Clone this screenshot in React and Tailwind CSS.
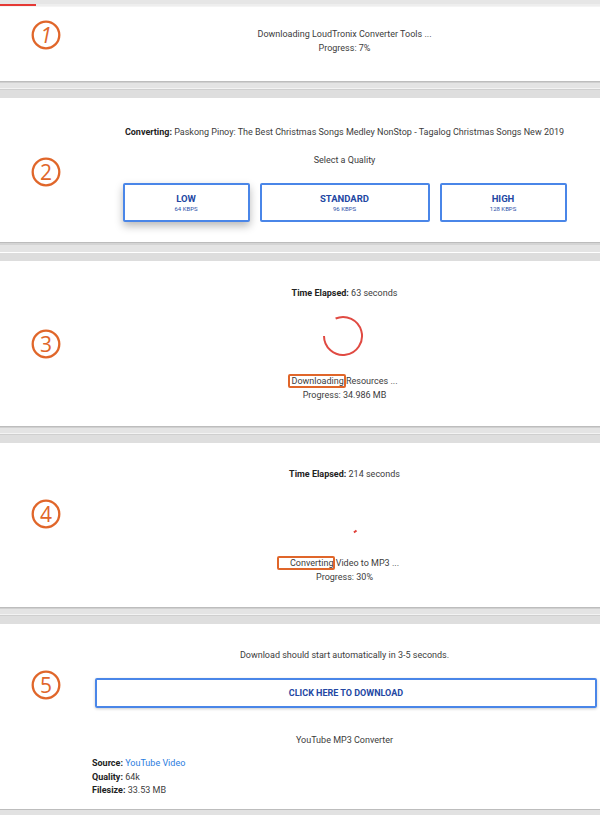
import React from "react";

const font = { fontFamily: "Roboto, 'Noto Sans', Arial, sans-serif" };

function Num({ n, italic }) {
  return (
    <svg width="30" height="30" viewBox="0 0 30 30">
      <circle cx="15" cy="15" r="13.3" fill="none" stroke="#e0662a" strokeWidth="2.3" />
      <text
        x="15"
        y="22.5"
        textAnchor="middle"
        fontSize="21"
        fill="#e0662a"
        fontStyle={italic ? "italic" : "normal"}
        fontFamily="'Open Sans', 'DejaVu Sans', sans-serif"
      >
        {n}
      </text>
    </svg>
  );
}

function Panel({ n, italic, numTop, h, children }) {
  return (
    <div className="flex bg-white" style={{ height: h }}>
      <div className="w-[92px] shrink-0 flex justify-center">
        <div style={{ marginTop: numTop }}>
          <Num n={n} italic={italic} />
        </div>
      </div>
      <div className="flex-1 pr-[3px] flex flex-col text-[9px] leading-[14px] text-[#3c3c3c]">
        {children}
      </div>
    </div>
  );
}

function Gap({ variant }) {
  if (variant === "b") {
    return (
      <div className="flex flex-col">
        <div className="h-[1px] bg-[#bcbcbc]" />
        <div className="h-[2px] bg-[#d4d4d4]" />
        <div className="h-[7px] bg-[#e4e4e4]" />
        <div className="h-[1px] bg-[#ffffff]" />
        <div className="h-[8px] bg-[#dddddd]" />
      </div>
    );
  }
  return (
    <div className="flex flex-col">
      <div className="h-[1px] bg-[#bdbdbd]" />
      <div className="h-[1px] bg-[#d0d0d0]" />
      <div className="h-[5px] bg-[#e4e4e4]" />
      <div className="h-[1px] bg-[#f3f3f3]" />
      <div className="h-[1px] bg-[#cfcfcf]" />
      <div className="h-[8px] bg-[#dedede]" />
    </div>
  );
}

function Mark({ children, l, r }) {
  return (
    <span className="relative">
      {children}
      <span
        className="absolute top-[-2px] bottom-[-2px] rounded-[2px] border-2 border-[#e0662a]"
        style={{ left: l, right: r }}
      />
    </span>
  );
}

function QBtn({ w, title, sub, shadow }) {
  return (
    <div
      className={`h-[39px] border-2 border-[#4a86e8] rounded-[2px] bg-white flex flex-col items-center justify-center ${
        shadow ? "shadow-[0_4px_8px_rgba(0,0,0,0.28)]" : ""
      }`}
      style={{ width: w }}
    >
      <div className="text-[9.5px] leading-[11px] font-bold text-[#2347a3]">{title}</div>
      <div className="text-[6px] leading-[9px] text-[#2a4ea8]">{sub}</div>
    </div>
  );
}

export default function App() {
  return (
    <div className="w-[600px] h-[815px] bg-[#e0e0e0] overflow-hidden" style={font}>
      <div className="h-[7px] flex flex-col bg-[#e6e6e6]">
        <div className="h-[4px]" />
        <div className="h-[2px] flex bg-[#eeeeee]">
          <div className="w-[36px] bg-[#e53935]" />
        </div>
        <div className="h-[1px] bg-[#f4f4f4]" />
      </div>

      <Panel n="1" italic numTop="13px" h="74px">
        <div className="pt-[20px] text-center">
          <div>Downloading LoudTronix Converter Tools ...</div>
          <div>Progress: 7%</div>
        </div>
      </Panel>
      <Gap />

      <Panel n="2" numTop="59px" h="144px">
        <div className="pt-[27px] flex flex-col items-center">
          <div>
            <span className="font-bold text-[#222]">Converting:</span> Paskong Pinoy: The Best Christmas
            Songs Medley NonStop - Tagalog Christmas Songs New 2019
          </div>
          <div className="mt-[14px]">Select a Quality</div>
          <div className="mt-[16px] flex gap-[10px]">
            <QBtn w="127px" title="LOW" sub="64 KBPS" shadow />
            <QBtn w="170px" title="STANDARD" sub="96 KBPS" />
            <QBtn w="127px" title="HIGH" sub="128 KBPS" />
          </div>
        </div>
      </Panel>
      <Gap variant="b" />

      <Panel n="3" numTop="68px" h="165px">
        <div className="pt-[25px] flex flex-col items-center">
          <div>
            <span className="font-bold text-[#222]">Time Elapsed:</span> 63 seconds
          </div>
          <svg className="mt-[15px] mr-[4px]" width="42" height="42" viewBox="0 0 42 42">
            <path d="M13.6 3.5 A19 19 0 1 1 2 21" fill="none" stroke="#e04a42" strokeWidth="2" />
          </svg>
          <div className="mt-[17px]">
            <Mark l="-3px" r="-2px">Downloading</Mark> Resources ...
          </div>
          <div>Progress: 34.986 MB</div>
        </div>
      </Panel>
      <Gap />

      <Panel n="4" numTop="56px" h="164px">
        <div className="pt-[24px] flex flex-col items-center">
          <div>
            <span className="font-bold text-[#222]">Time Elapsed:</span> 214 seconds
          </div>
          <svg className="mt-[15px] mr-[4px]" width="42" height="42" viewBox="0 0 42 42">
            <path d="M31.9 36.3 A19 19 0 0 0 34.5 34.4" fill="none" stroke="#e0403a" strokeWidth="2" />
          </svg>
          <div className="mt-[18px]">
            <Mark l="-13px" r="-2px">Converting</Mark> Video to MP3 ...
          </div>
          <div>Progress: 30%</div>
        </div>
      </Panel>
      <Gap />

      <Panel n="5" numTop="46px" h="185px">
        <div className="pt-[24px] flex flex-col">
          <div className="text-center">Download should start automatically in 3-5 seconds.</div>
          <div className="mt-[16px] ml-[3px] h-[30px] border-2 border-[#4a86e8] rounded-[2px] flex items-center justify-center shadow-[0_1px_3px_rgba(0,0,0,0.2)]">
            <span className="font-bold text-[#2347a3]">CLICK HERE TO DOWNLOAD</span>
          </div>
          <div className="mt-[25px] text-center">YouTube MP3 Converter</div>
          <div className="mt-[10px] leading-[13.5px]">
            <div>
              <span className="font-bold text-[#222]">Source:</span>{" "}
              <span className="text-[#2b7de0]">YouTube Video</span>
            </div>
            <div>
              <span className="font-bold text-[#222]">Quality:</span> 64k
            </div>
            <div>
              <span className="font-bold text-[#222]">Filesize:</span> 33.53 MB
            </div>
          </div>
        </div>
      </Panel>
      <div className="h-[1px] bg-[#bdbdbd]" />
      <div className="h-[5px] bg-[#e2e2e2]" />
    </div>
  );
}
